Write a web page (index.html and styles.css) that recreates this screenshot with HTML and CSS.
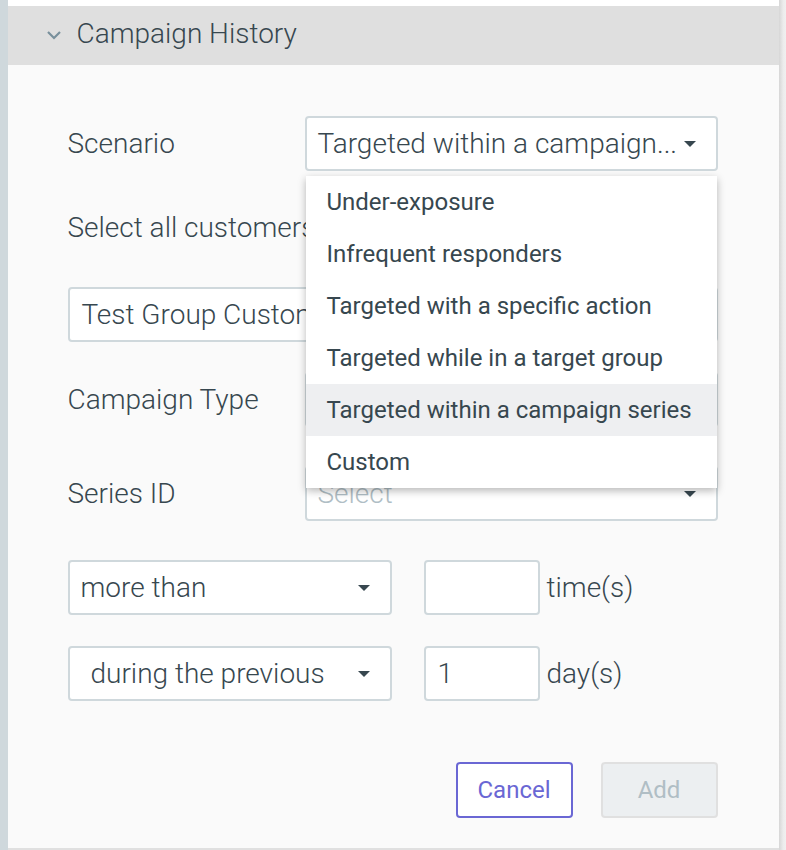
FILE: index.html
```html
<!DOCTYPE html>
<html lang="en">
<head>
    <meta charset="UTF-8">
    <meta name="viewport" content="width=device-width, initial-scale=1.0">
    <link rel="stylesheet" href="styles.css">
    <title>Campaign History</title>
</head>
<body>
    <div class="frame">
        <div class="rail"></div>
        <main class="panel">
            <div class="panel-header">
                <svg class="chevron" width="16" height="10" viewBox="0 0 16 10">
                    <path d="M2 2 L8 8 L14 2" fill="none" stroke="#78909c" stroke-width="2.2"/>
                </svg>
                <span>Campaign History</span>
            </div>
            <div class="panel-body">
                <div class="form-row">
                    <label class="field-label">Scenario</label>
                    <div class="select-wrap">
                        <div class="select">
                            <span class="select-value">Targeted within a campaign...</span>
                            <span class="caret"></span>
                        </div>
                        <ul class="menu">
                            <li class="menu-item">Under-exposure</li>
                            <li class="menu-item">Infrequent responders</li>
                            <li class="menu-item">Targeted with a specific action</li>
                            <li class="menu-item">Targeted while in a target group</li>
                            <li class="menu-item active">Targeted within a campaign series</li>
                            <li class="menu-item">Custom</li>
                        </ul>
                    </div>
                </div>

                <div class="plain-label">Select all customers who are in</div>

                <div class="input wide">Test Group Customers</div>

                <div class="form-row tight">
                    <label class="field-label">Campaign Type</label>
                    <div class="select">
                        <span class="select-value">Marketing</span>
                        <span class="caret"></span>
                    </div>
                </div>

                <div class="form-row">
                    <label class="field-label">Series ID</label>
                    <div class="select">
                        <span class="select-value placeholder">Select</span>
                        <span class="caret"></span>
                    </div>
                </div>

                <div class="count-row">
                    <div class="select short">
                        <span class="select-value">more than</span>
                        <span class="caret"></span>
                    </div>
                    <div class="input small"></div>
                    <span class="unit">time(s)</span>
                </div>

                <div class="count-row tight">
                    <div class="select short roomy">
                        <span class="select-value">during the previous</span>
                        <span class="caret"></span>
                    </div>
                    <div class="input small">1</div>
                    <span class="unit">day(s)</span>
                </div>

                <div class="actions">
                    <button class="btn btn-outline">Cancel</button>
                    <button class="btn btn-disabled">Add</button>
                </div>
            </div>
        </main>
        <div class="edge"></div>
    </div>
</body>
</html>
```

FILE: styles.css
```css
body {
    margin: 0;
    font-family: Roboto, "Liberation Sans", Arial, sans-serif;
    color: #37474f;
    background-color: #fff;
    overflow: hidden;
}

.frame {
    display: flex;
    height: 100vh;
}

.rail {
    width: 8px;
    background-color: #cfd8dc;
}

.edge {
    width: 8px;
    background: linear-gradient(to right, #d6d6d6, #ececec 60%, #f0f0f0);
}

.panel {
    flex: 1;
    display: flex;
    flex-direction: column;
    padding-top: 6px;
    background-color: #fff;
}

.panel-header {
    display: flex;
    align-items: center;
    box-sizing: border-box;
    height: 59px;
    padding: 0 0 4px 38px;
    background-color: #dfdfdf;
    font-size: 28px;
    font-weight: 300;
}

.chevron {
    margin-right: 15px;
    margin-top: 3px;
}

.panel-body {
    flex: 1;
    padding: 51px 61px 0 60px;
    background-color: #fafafa;
    border-bottom: 2px solid #e0e0e0;
}

.form-row {
    display: flex;
    align-items: center;
    margin-top: 39px;
}

.form-row:first-child {
    margin-top: 0;
}

.form-row.tight {
    margin-top: 30px;
}

.field-label {
    width: 237px;
    font-size: 28px;
    font-weight: 300;
}

.select-wrap {
    position: relative;
}

.select {
    display: flex;
    align-items: center;
    justify-content: space-between;
    box-sizing: border-box;
    width: 413px;
    height: 55px;
    padding: 0 20px 0 11px;
    background-color: #fff;
    border: 2px solid #cfd8dc;
    border-radius: 4px;
    font-size: 28px;
    font-weight: 300;
    white-space: nowrap;
}

.select-value.placeholder {
    color: #b0bec5;
}

.caret {
    width: 0;
    height: 0;
    border-left: 6px solid transparent;
    border-right: 6px solid transparent;
    border-top: 6px solid #37474f;
}

.menu {
    position: absolute;
    top: 60px;
    left: 1px;
    width: 411px;
    margin: 0;
    padding: 0;
    list-style: none;
    background-color: #fff;
    box-shadow: 0 3px 8px rgba(0, 0, 0, 0.28);
    z-index: 2;
}

.menu-item {
    height: 52px;
    line-height: 52px;
    padding-left: 21px;
    font-size: 24px;
    white-space: nowrap;
}

.menu-item.active {
    background-color: #eeeff1;
}

.plain-label {
    margin-top: 42px;
    line-height: 30px;
    font-size: 28px;
    font-weight: 300;
    white-space: nowrap;
}

.input {
    display: flex;
    align-items: center;
    box-sizing: border-box;
    height: 55px;
    padding: 0 12px;
    background-color: #fff;
    border: 2px solid #cfd8dc;
    border-radius: 4px;
    font-size: 28px;
    font-weight: 300;
    white-space: nowrap;
    overflow: hidden;
}

.input.wide {
    margin-top: 44px;
    width: 650px;
}

.input.small {
    width: 116px;
}

.count-row {
    display: flex;
    align-items: center;
    margin-top: 39px;
}

.count-row.tight {
    margin-top: 31px;
}

.select.short {
    width: 324px;
    margin-right: 32px;
    padding-right: 20px;
}

.select.roomy {
    padding-left: 21px;
}

.unit {
    margin-left: 7px;
    font-size: 28px;
    font-weight: 300;
}

.actions {
    display: flex;
    justify-content: flex-end;
    gap: 28px;
    margin-top: 61px;
}

.btn {
    width: 117px;
    height: 56px;
    font-family: inherit;
    font-size: 24px;
    border-radius: 4px;
    cursor: pointer;
}

.btn-outline {
    background-color: #fff;
    color: #6a67d4;
    border: 2px solid #6a67d4;
}

.btn-disabled {
    background-color: #eceff1;
    color: #b0bec5;
    border: 2px solid #e0e0e0;
    cursor: default;
}
```
